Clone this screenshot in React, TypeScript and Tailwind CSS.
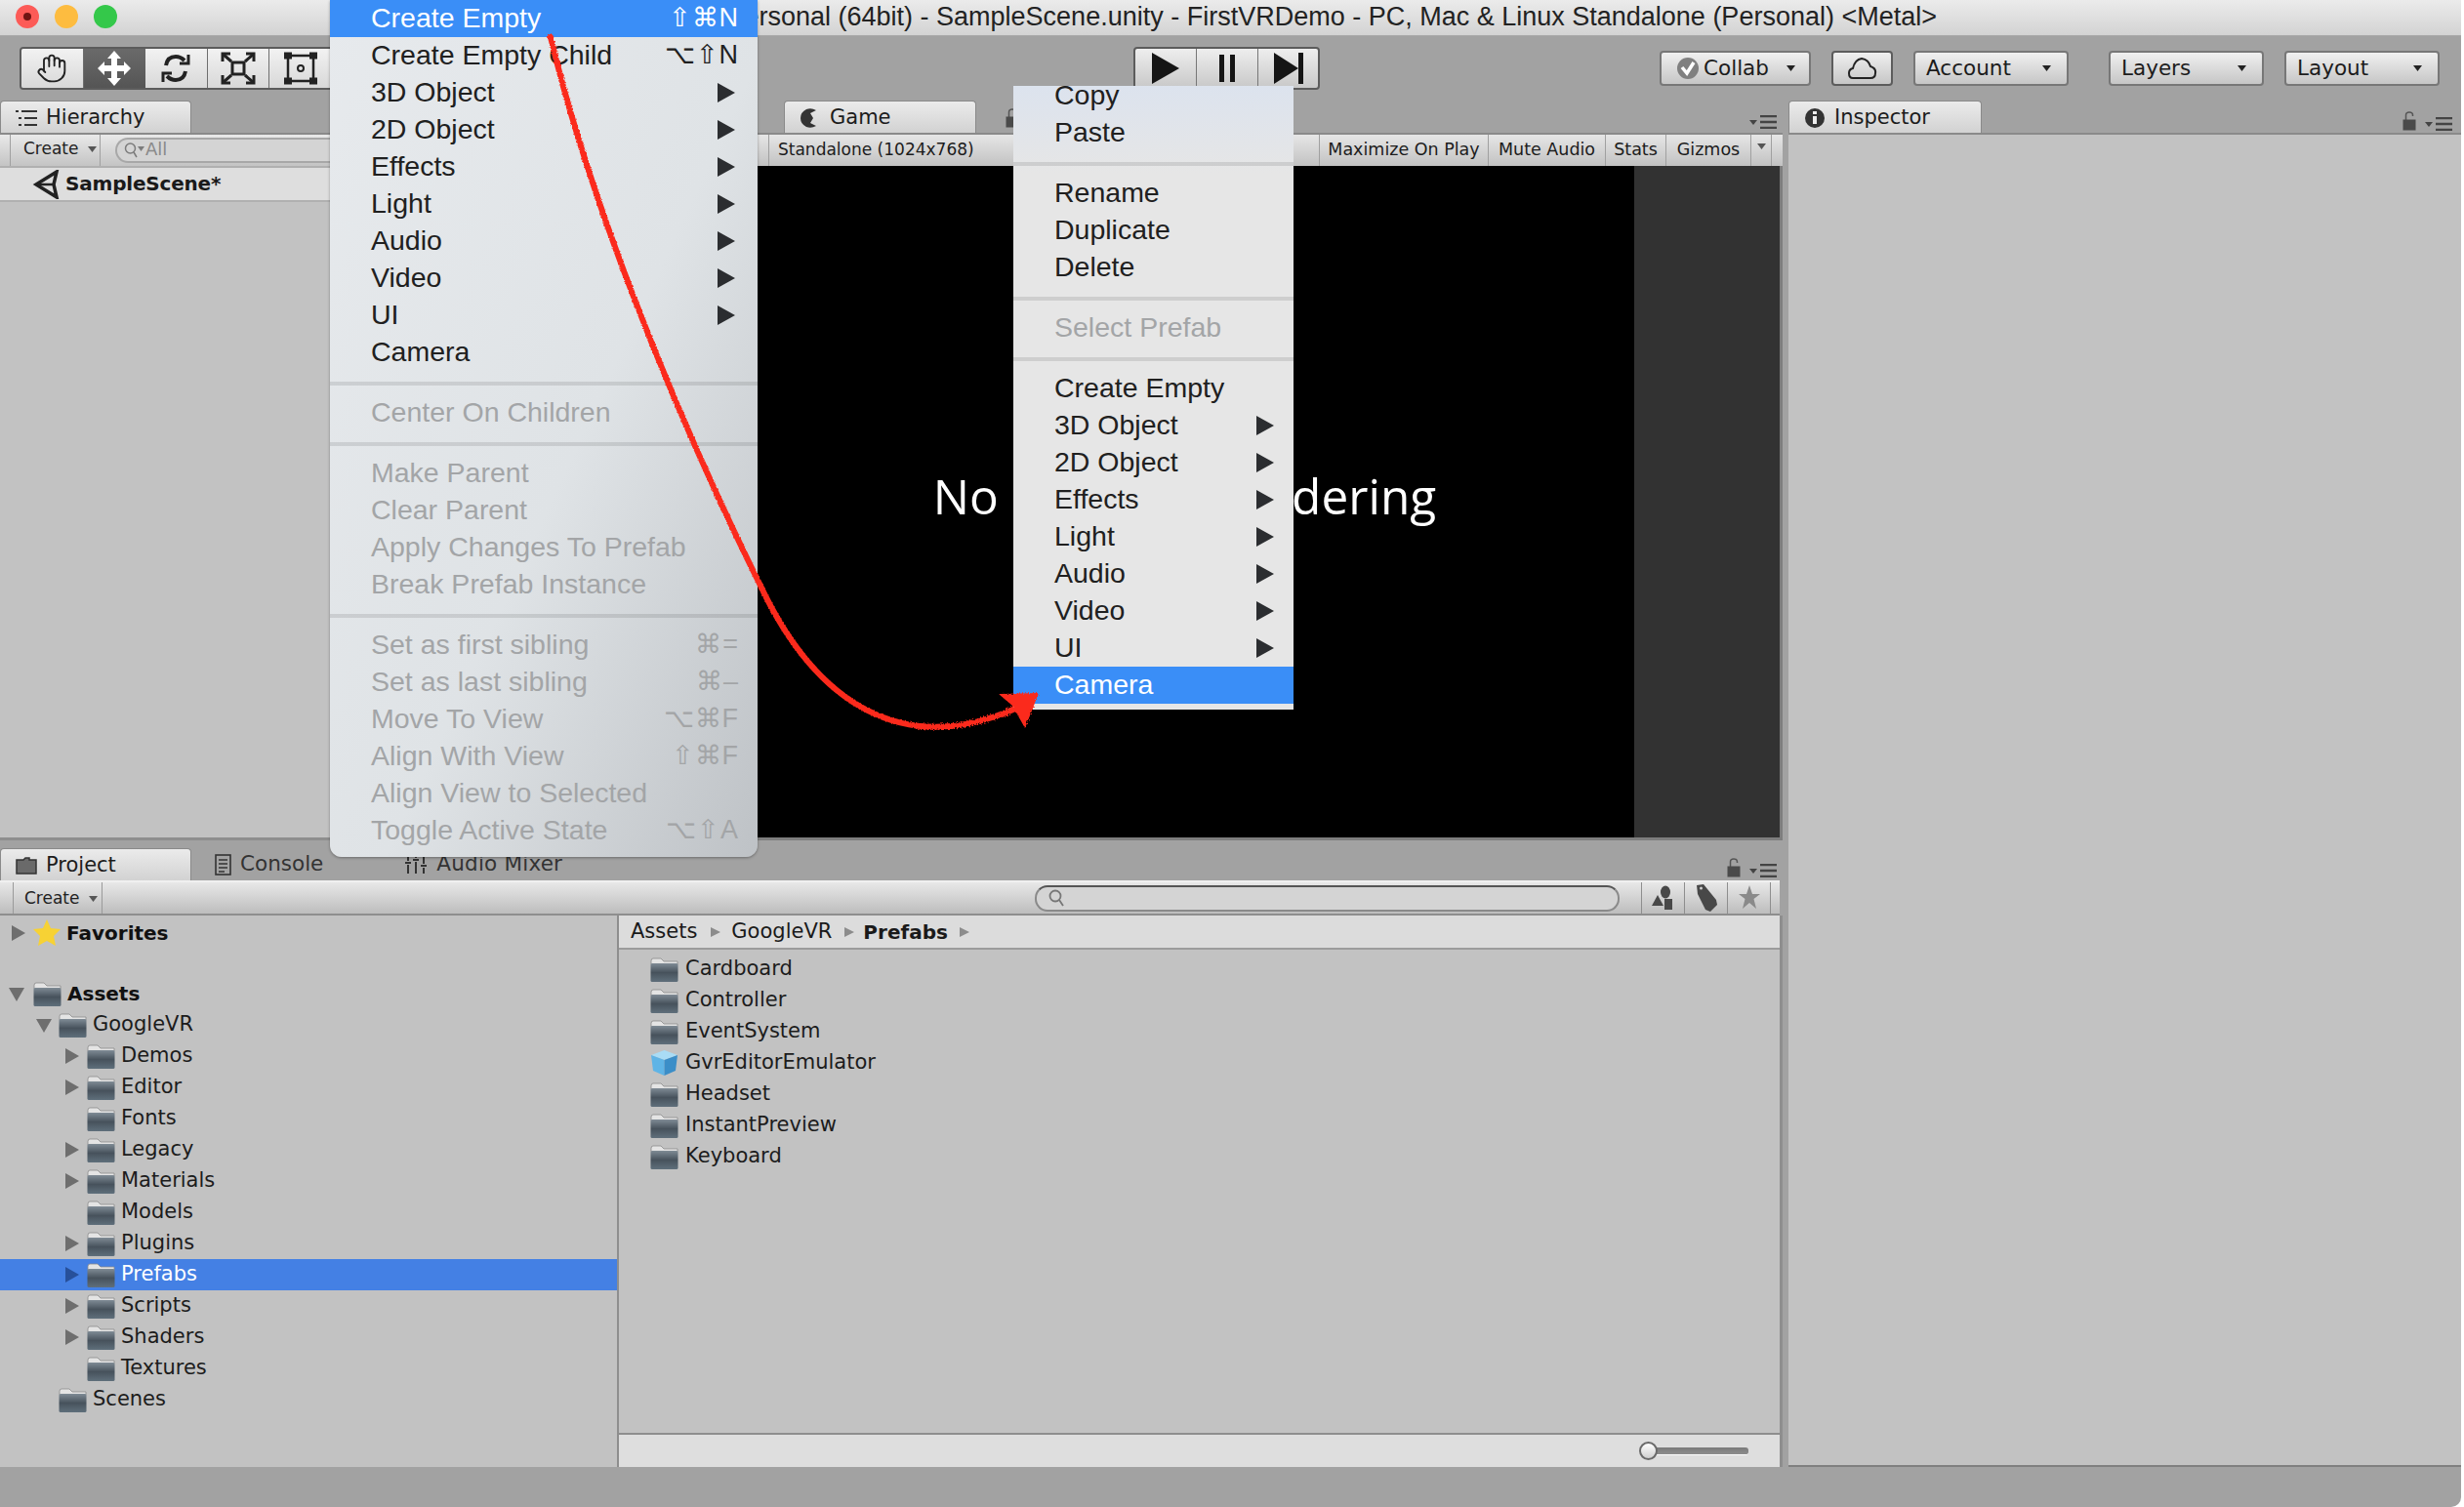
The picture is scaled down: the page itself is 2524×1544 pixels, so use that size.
import { Hand } from "lucide-react";

interface MenuRow {
  label?: string;
  shortcut?: string;
  arrow?: boolean;
  disabled?: boolean;
  active?: boolean;
  separator?: boolean;
}

const hierarchyMenu: MenuRow[] = [
  { label: "Create Empty", shortcut: "⇧⌘N", active: true },
  { label: "Create Empty Child", shortcut: "⌥⇧N" },
  { label: "3D Object", arrow: true },
  { label: "2D Object", arrow: true },
  { label: "Effects", arrow: true },
  { label: "Light", arrow: true },
  { label: "Audio", arrow: true },
  { label: "Video", arrow: true },
  { label: "UI", arrow: true },
  { label: "Camera" },
  { separator: true },
  { label: "Center On Children", disabled: true },
  { separator: true },
  { label: "Make Parent", disabled: true },
  { label: "Clear Parent", disabled: true },
  { label: "Apply Changes To Prefab", disabled: true },
  { label: "Break Prefab Instance", disabled: true },
  { separator: true },
  { label: "Set as first sibling", shortcut: "⌘=", disabled: true },
  { label: "Set as last sibling", shortcut: "⌘–", disabled: true },
  { label: "Move To View", shortcut: "⌥⌘F", disabled: true },
  { label: "Align With View", shortcut: "⇧⌘F", disabled: true },
  { label: "Align View to Selected", disabled: true },
  { label: "Toggle Active State", shortcut: "⌥⇧A", disabled: true },
];

const contextMenu: MenuRow[] = [
  { label: "Copy" },
  { label: "Paste" },
  { separator: true },
  { label: "Rename" },
  { label: "Duplicate" },
  { label: "Delete" },
  { separator: true },
  { label: "Select Prefab", disabled: true },
  { separator: true },
  { label: "Create Empty" },
  { label: "3D Object", arrow: true },
  { label: "2D Object", arrow: true },
  { label: "Effects", arrow: true },
  { label: "Light", arrow: true },
  { label: "Audio", arrow: true },
  { label: "Video", arrow: true },
  { label: "UI", arrow: true },
  { label: "Camera", active: true },
];

const tree = [
  { name: "GoogleVR", depth: 1, open: true },
  { name: "Demos", depth: 2, arrow: true },
  { name: "Editor", depth: 2, arrow: true },
  { name: "Fonts", depth: 2 },
  { name: "Legacy", depth: 2, arrow: true },
  { name: "Materials", depth: 2, arrow: true },
  { name: "Models", depth: 2 },
  { name: "Plugins", depth: 2, arrow: true },
  { name: "Prefabs", depth: 2, arrow: true, selected: true },
  { name: "Scripts", depth: 2, arrow: true },
  { name: "Shaders", depth: 2, arrow: true },
  { name: "Textures", depth: 2 },
  { name: "Scenes", depth: 1 },
];

const assets = ["Cardboard", "Controller", "EventSystem", "GvrEditorEmulator", "Headset", "InstantPreview", "Keyboard"];

function Folder() {
  return (
    <svg width="29" height="27" viewBox="0 0 29 27" className="shrink-0">
      <defs>
        <linearGradient id="folderBody" x1="0" y1="0" x2="0" y2="1">
          <stop offset="0" stopColor="#7f8b95" />
          <stop offset="0.5" stopColor="#47525c" />
          <stop offset="1" stopColor="#5f6f7b" />
        </linearGradient>
      </defs>
      <path d="M1 4.5Q1 2 3 2H11L14 5H28V8H1Z" fill="#e4e4e4" stroke="#8a8a8a" strokeWidth="0.8" />
      <rect x="0.5" y="7" width="28" height="19" rx="1.5" fill="url(#folderBody)" />
    </svg>
  );
}

function Cube() {
  return (
    <svg width="29" height="28" viewBox="0 0 29 28" className="shrink-0">
      <path d="M14.5 1L28 6L14.5 11L1 6Z" fill="#a9dcf5" />
      <path d="M1 6L14.5 11V27L3 22Z" fill="#5fb4e6" />
      <path d="M28 6L14.5 11V27L26 22Z" fill="#3b8ec8" />
    </svg>
  );
}

function Triangle({ open, color = "#6e6e6e" }: { open?: boolean; color?: string }) {
  return (
    <svg width="18" height="18" viewBox="0 0 18 18" className="shrink-0">
      <path d={open ? "M1 3H17L9 17Z" : "M2 1L16 9L2 17Z"} fill={color} />
    </svg>
  );
}

function ListMenuIcon() {
  return (
    <svg width="28" height="14" viewBox="0 0 28 14" className="shrink-0">
      <path d="M0 5H8L4 10Z" fill="#444" />
      <path d="M11 1H28M11 7H28M11 13H28" stroke="#444" strokeWidth="2.4" />
    </svg>
  );
}

function LockIcon() {
  return (
    <svg width="14" height="20" viewBox="0 0 14 20" className="shrink-0">
      <path d="M3.5 9V4Q3.5 1 7 1T10.5 4V5" fill="none" stroke="#555" strokeWidth="1.5" />
      <rect x="0.5" y="8.5" width="13" height="11" fill="#4a4a4a" />
    </svg>
  );
}

function SmallCaret({ color = "#222" }: { color?: string }) {
  return (
    <svg width="9" height="6" viewBox="0 0 9 6" className="shrink-0">
      <path d="M0 0H9L4.5 6Z" fill={color} />
    </svg>
  );
}

function Crumb({ className }: { className: string }) {
  return (
    <svg width="12" height="12" viewBox="0 0 12 12" className={className}>
      <path d="M1 1L11 6L1 11Z" fill="#8c8c8c" />
    </svg>
  );
}

function ToolButton({ children, active }: { children: React.ReactNode; active?: boolean }) {
  return (
    <div
      className={
        active
          ? "w-[64px] h-full flex items-center justify-center bg-[linear-gradient(#6a6a6a,#555555)]"
          : "w-[64px] h-full flex items-center justify-center border-r border-[#6e6e6e] bg-[linear-gradient(#f2f2f2,#d8d8d8)]"
      }
    >
      {children}
    </div>
  );
}

function ToolbarSelect({ label, width, gap }: { label: string; width: string; gap?: boolean }) {
  return (
    <div
      className={`${width} ${gap ? "ml-[41px]" : "ml-[21px]"} h-[36px] flex items-center justify-between pl-[11px] pr-[16px] rounded-[4px] border-2 border-[#777777] bg-[linear-gradient(#f0f0f0,#c6c6c6)] text-[21.5px] text-[#1c1c1c]`}
    >
      <span>{label}</span>
      <SmallCaret />
    </div>
  );
}

function PanelTab({ children, width }: { children: React.ReactNode; width: string }) {
  return (
    <div
      className={`${width} h-[33px] flex items-center gap-[9px] pl-[15px] pt-[1px] rounded-t-[4px] border-t border-x border-[#8a8a8a] bg-[linear-gradient(#ebebeb,#d2d2d2)] text-[21px] text-[#1c1c1c]`}
    >
      {children}
    </div>
  );
}

function MenuList({ rows, arrowGap }: { rows: MenuRow[]; arrowGap: string }) {
  return (
    <>
      {rows.map((row, index) =>
        row.separator ? (
          <div key={index} className="h-[24px] pt-[11px]">
            <div className="h-[4px] bg-black/10" />
          </div>
        ) : (
          <div
            key={index}
            className={`h-[38px] shrink-0 flex items-center justify-between pr-[19px] pl-[42px] ${
              row.active ? "bg-[#3a8ef7] text-white" : row.disabled ? "text-[#a3a5a7]" : "text-[#202020]"
            }`}
          >
            <span className="whitespace-nowrap pb-[2px]">{row.label}</span>
            {row.shortcut && <span className="text-[27px] font-['Liberation_Sans',sans-serif] whitespace-nowrap tracking-[1px] pb-[2px]">{row.shortcut}</span>}
            {row.arrow && (
              <svg width="18" height="20" viewBox="0 0 18 20" className={`shrink-0 ${arrowGap}`}>
                <path d="M0 0L18 10L0 20Z" fill="#2b2d30" />
              </svg>
            )}
          </div>
        ),
      )}
    </>
  );
}

export default function App() {
  return (
    <div className="relative w-[2524px] h-[1544px] overflow-hidden bg-white font-['DejaVu_Sans',sans-serif]">
      <div className="w-[2521px] h-full flex flex-col bg-[#a2a2a2] rounded-br-[10px]">
        {/* title bar */}
        <div className="h-[37px] shrink-0 relative flex items-center justify-end pr-[537px] pb-[2px] border-b border-[#a8a8a8] bg-[linear-gradient(#ebebeb,#d3d3d3)] text-[27px] text-[#222] font-['Liberation_Sans',sans-serif]">
          <div className="absolute left-[16px] top-[5px] flex gap-[16px]">
            <div className="w-[24px] h-[24px] rounded-full bg-[#fc5b57] flex items-center justify-center">
              <div className="w-[8px] h-[8px] rounded-full bg-[#6e1512]" />
            </div>
            <div className="w-[24px] h-[24px] rounded-full bg-[#fdbc40]" />
            <div className="w-[24px] h-[24px] rounded-full bg-[#34c84a]" />
          </div>
          <span className="whitespace-nowrap">Personal (64bit) - SampleScene.unity - FirstVRDemo - PC, Mac &amp; Linux Standalone (Personal) &lt;Metal&gt;</span>
        </div>

        {/* toolbar */}
        <div className="h-[66px] shrink-0 flex items-start pt-[11px]">
          <div className="ml-[20px] w-[322px] h-[44px] flex rounded-[4px] border-2 border-[#5c5c5c] overflow-hidden">
            <ToolButton>
              <Hand size={32} strokeWidth={1.4} color="#222" />
            </ToolButton>
            <ToolButton active>
              <svg width="36" height="38" viewBox="0 0 36 38">
                <path d="M18 1L25 9H21V16H28V12L35 19L28 26V22H21V29H25L18 37L11 29H15V22H8V26L1 19L8 12V16H15V9H11Z" fill="#fff" />
              </svg>
            </ToolButton>
            <ToolButton>
              <svg width="30" height="32" viewBox="0 0 30 32" fill="none" stroke="#222" strokeWidth="4">
                <path d="M5 13C6 7 10 4 15 4C19 4 22 6 24 8" />
                <path d="M25 19C24 25 20 28 15 28C11 28 8 26 6 24" />
                <path d="M28 2V11H19" strokeWidth="3" />
                <path d="M2 30V21H11" strokeWidth="3" />
              </svg>
            </ToolButton>
            <ToolButton>
              <svg width="36" height="34" viewBox="0 0 36 34" fill="none" stroke="#222" strokeWidth="3">
                <rect x="12" y="11" width="12" height="12" />
                <path d="M3 3L11 10M33 3L25 10M3 31L11 24M33 31L25 24" />
                <path d="M2 10V2H10M26 2H34V10M2 24V32H10M26 32H34V24" />
              </svg>
            </ToolButton>
            <ToolButton>
              <svg width="36" height="36" viewBox="0 0 36 36" fill="none" stroke="#222" strokeWidth="3">
                <path d="M5 5H31V31H5Z" strokeWidth="2.5" />
                <circle cx="18" cy="18" r="3" strokeWidth="2" />
                <path d="M1 5H9M27 5H35M1 31H9M27 31H35" strokeWidth="7" />
              </svg>
            </ToolButton>
          </div>

          <div className="ml-[819px] w-[191px] h-[44px] flex rounded-[4px] border-2 border-[#5c5c5c] overflow-hidden bg-[linear-gradient(#eeeeee,#c8c8c8)]">
            <div className="w-[63px] h-full flex items-center justify-center border-r border-[#777]">
              <svg width="32" height="32" viewBox="0 0 32 32">
                <path d="M2 0L30 16L2 32Z" fill="#151515" />
              </svg>
            </div>
            <div className="w-[63px] h-full flex items-center justify-center border-r border-[#777] gap-[6px]">
              <div className="w-[5px] h-[28px] bg-[#151515]" />
              <div className="w-[5px] h-[28px] bg-[#151515]" />
            </div>
            <div className="flex-1 h-full flex items-center justify-center">
              <svg width="32" height="32" viewBox="0 0 32 32">
                <path d="M1 0L26 16L1 32Z" fill="#151515" />
                <rect x="26" y="0" width="5" height="32" fill="#151515" />
              </svg>
            </div>
          </div>

          <div className="mt-[4px] ml-[348px] w-[155px] h-[36px] flex items-center pl-[15px] pr-[14px] rounded-[4px] border-2 border-[#777777] bg-[linear-gradient(#f0f0f0,#c6c6c6)] text-[21.5px] text-[#1c1c1c]">
            <svg width="24" height="24" viewBox="0 0 24 24" className="shrink-0">
              <circle cx="12" cy="12" r="11" fill="#808080" />
              <path d="M6 11L11 17L18 6" fill="none" stroke="#fff" strokeWidth="3.5" />
            </svg>
            <span className="ml-[4px] mr-auto">Collab</span>
            <SmallCaret />
          </div>
          <div className="mt-[4px] ml-[21px] w-[63px] h-[36px] flex items-center justify-center rounded-[4px] border-2 border-[#5c5c5c] bg-[linear-gradient(#f0f0f0,#c6c6c6)]">
            <svg width="30" height="24" viewBox="0 0 30 24" fill="none" stroke="#222" strokeWidth="2">
              <path d="M5 22Q1 22 1 17Q1 13 5 12Q7 3 14 2Q21 3 23 10Q29 12 28 17Q28 22 23 22Z" />
            </svg>
          </div>
          <div className="mt-[4px] flex">
            <ToolbarSelect label="Account" width="w-[159px]" />
            <ToolbarSelect label="Layers" width="w-[159px]" gap />
            <ToolbarSelect label="Layout" width="w-[159px]" />
          </div>
        </div>

        {/* panels */}
        <div className="flex-1 min-h-0 flex gap-[6px]">
          <div className="w-[1826px] flex flex-col">
            <div className="h-[758px] shrink-0 flex">
              {/* hierarchy */}
              <div className="w-[776px] flex flex-col">
                <PanelTab width="w-[196px]">
                  <svg width="22" height="18" viewBox="0 0 22 18" className="shrink-0">
                    <path d="M0 2H3M6 2H22M3 9H6M9 9H22M3 16H6M9 16H22" stroke="#333" strokeWidth="2.2" />
                  </svg>
                  <span>Hierarchy</span>
                </PanelTab>
                <div className="h-[34px] shrink-0 flex items-center border-t-2 border-[#8a8a8a] bg-[linear-gradient(#e9e9e9,#c4c4c4)] text-[17px] text-[#222]">
                  <div className="ml-[10px] w-[93px] h-full flex items-center gap-[9px] pl-[13px] pb-[2px] border-x border-[#a0a0a0]">
                    <span>Create</span>
                    <SmallCaret color="#555" />
                  </div>
                  <div className="ml-[15px] flex-1 h-[26px] flex items-center pl-[7px] rounded-l-[13px] border-2 border-r-0 border-[#a8a8a8] bg-[#d4d4d4] text-[18px] text-[#8a8a8a]">
                    <svg width="22" height="18" viewBox="0 0 22 18" fill="none" stroke="#7b7b7b" strokeWidth="1.5">
                      <circle cx="6.5" cy="7" r="5" />
                      <path d="M10 11L13 16" />
                      <path d="M14 5H21L17.5 10Z" fill="#7b7b7b" stroke="none" />
                    </svg>
                    <span className="pb-[3px]">All</span>
                  </div>
                </div>
                <div className="h-[37px] shrink-0 flex items-center gap-[6px] pl-[33px] border-y-2 border-[#b0b0b0] bg-[#dedede] text-[20px] font-bold text-[#1a1a1a]">
                  <svg width="28" height="30" viewBox="0 0 28 30" fill="none" stroke="#222" strokeWidth="3.5">
                    <path d="M25 2L4 15L25 28L22 15Z" />
                    <path d="M4 15H22" strokeWidth="2.5" />
                  </svg>
                  <span className="tracking-[-0.2px] pb-[2px]">SampleScene*</span>
                </div>
                <div className="flex-1 bg-[#c2c2c2] border-b-[3px] border-[#8e8e8e]" />
              </div>

              {/* game */}
              <div className="flex-1 flex flex-col min-w-0">
                <div className="h-[33px] shrink-0 flex items-start pl-[27px]">
                  <PanelTab width="w-[197px]">
                    <svg width="20" height="22" viewBox="0 0 20 22" className="shrink-0">
                      <path d="M17 3Q12 0 7 2Q1 5 1 11Q1 17 7 20Q12 22 17 19L11 16L14 11L11 6Z" fill="#333" />
                    </svg>
                    <span className="ml-[2px]">Game</span>
                  </PanelTab>
                  <div className="ml-[30px] mt-[8px]">
                    <LockIcon />
                  </div>
                  <div className="ml-auto mr-[6px] mt-[15px]">
                    <ListMenuIcon />
                  </div>
                </div>
                <div className="h-[34px] shrink-0 flex items-center border-t-2 border-[#8a8a8a] bg-[linear-gradient(#e6e6e6,#c2c2c2)] text-[17.5px] text-[#1c1c1c] whitespace-nowrap">
                  <div className="ml-[11px] pl-[9px] border-l border-[#a0a0a0] h-full flex items-center text-[17px] pb-[1px]">Standalone (1024x768)</div>
                  <div className="ml-auto w-[174px] h-full flex items-center justify-center pb-[1px] border-x border-[#a0a0a0]">Maximize On Play</div>
                  <div className="w-[120px] h-full flex items-center justify-center pb-[1px] border-r border-[#a0a0a0]">Mute Audio</div>
                  <div className="w-[62px] h-full flex items-center justify-center pb-[1px] border-r border-[#a0a0a0]">Stats</div>
                  <div className="w-[87px] h-full flex items-center justify-center pb-[1px] border-r border-[#a0a0a0]">Gizmos</div>
                  <div className="w-[21px] h-full flex items-start pt-[9px] justify-center border-r border-[#a0a0a0]">
                    <SmallCaret color="#555" />
                  </div>
                  <div className="w-[11px]" />
                </div>
                <div className="flex-1 flex border-r-[3px] border-b-[3px] border-[#7e7e7e]">
                  <div className="w-[898px] bg-black flex items-center justify-center pr-[23px] pb-[12px] text-[49.5px] text-white whitespace-nowrap font-['Open_Sans',sans-serif]">
                    No cameras rendering
                  </div>
                  <div className="flex-1 bg-[#323232]" />
                </div>
              </div>
            </div>

            {/* project */}
            <div className="flex-1 min-h-0 flex flex-col">
              <div className="h-[41px] shrink-0 flex items-end">
                <PanelTab width="w-[196px]">
                  <svg width="22" height="18" viewBox="0 0 22 18" className="shrink-0">
                    <path d="M1 17V3H8L10 1H14V3H21V17Z" fill="#6a6a6a" stroke="#333" strokeWidth="1.5" />
                  </svg>
                  <span>Project</span>
                </PanelTab>
                <div className="ml-[24px] h-[33px] flex items-center gap-[9px] text-[21.5px] text-[#333]">
                  <svg width="17" height="22" viewBox="0 0 17 22" fill="none" stroke="#333" strokeWidth="1.6">
                    <rect x="1" y="1" width="15" height="20" />
                    <path d="M4 6H13M4 10H13M4 14H13M4 18H10" />
                  </svg>
                  <span>Console</span>
                </div>
                <div className="ml-[84px] h-[33px] flex items-center gap-[10px] text-[21.5px] tracking-[0.2px] text-[#333]">
                  <svg width="22" height="22" viewBox="0 0 22 22" stroke="#333" strokeWidth="2">
                    <path d="M3 2V7M3 11V20M11 2V4M11 8V20M19 2V10M19 14V20M0 9H6M8 6H14M16 12H22" />
                  </svg>
                  <span>Audio Mixer</span>
                </div>
                <div className="ml-auto mb-[3px] flex items-end gap-[9px] pr-[6px]">
                  <LockIcon />
                  <ListMenuIcon />
                </div>
              </div>
              <div className="h-[36px] mr-[3px] shrink-0 flex items-center border-t-2 border-[#f0f0f0] border-b-2 border-b-[#8e8e8e] bg-[linear-gradient(#e8e8e8,#bdbdbd)] text-[17px] text-[#222]">
                <div className="ml-[13px] w-[92px] h-full flex items-center gap-[9px] pl-[11px] pt-[2px] border-x border-[#9a9a9a]">
                  <span>Create</span>
                  <SmallCaret color="#555" />
                </div>
                <div className="ml-[955px] w-[599px] h-[27px] flex items-center pl-[12px] rounded-[13px] border-2 border-[#8a8a8a] border-t-[#555] bg-[#d4d4d4]">
                  <svg width="18" height="20" viewBox="0 0 18 20" fill="none" stroke="#777" strokeWidth="1.8">
                    <circle cx="7" cy="8" r="5.5" />
                    <path d="M11 12L15 18" />
                  </svg>
                </div>
                <div className="ml-[22px] h-full flex border-l border-[#8e8e8e]">
                  <div className="w-[44px] flex items-center justify-center border-r border-[#8e8e8e]">
                    <svg width="24" height="26" viewBox="0 0 24 26" fill="#484848">
                      <ellipse cx="14" cy="7" rx="5" ry="6.5" />
                      <path d="M6 10L12 21H0Z" />
                      <rect x="13" y="14" width="8" height="11" />
                    </svg>
                  </div>
                  <div className="w-[44px] flex items-center justify-center border-r border-[#8e8e8e]">
                    <svg width="24" height="30" viewBox="0 0 24 30" fill="#484848">
                      <path d="M2 2L9 1L22 17L23 22L16 29L11 27L3 11Z" />
                      <circle cx="6.5" cy="5" r="1.5" fill="#cfcfcf" />
                    </svg>
                  </div>
                  <div className="w-[44px] flex items-center justify-center border-r border-[#8e8e8e]">
                    <svg width="22" height="26" viewBox="0 0 22 26" fill="#8a8a8a">
                      <path d="M11 0L14 9H22L15.5 14L18 24L11 18L4 24L6.5 14L0 9H8Z" />
                    </svg>
                  </div>
                </div>
              </div>
              <div className="flex-1 min-h-0 flex border-r-[3px] border-[#8e8e8e]">
                <div className="w-[632px] shrink-0 bg-[#c2c2c2] text-[21px] text-[#1c1c1c] pt-[2px]">
                  <div className="h-[32px] flex items-center pl-[10px]">
                    <Triangle />
                    <svg width="30" height="30" viewBox="0 0 30 30" className="ml-[5px] shrink-0">
                      <path d="M15 1L19 10L29 11L22 18L24 28L15 23L6 28L8 18L1 11L11 10Z" fill="#f7d234" />
                    </svg>
                    <span className="ml-[5px] text-[20px] font-bold text-[#111]">Favorites</span>
                  </div>
                  <div className="h-[30px]" />
                  <div className="h-[32px] flex items-center pl-[8px]">
                    <Triangle open />
                    <div className="ml-[8px]">
                      <Folder />
                    </div>
                    <span className="ml-[6px] text-[20px] font-bold text-[#111]">Assets</span>
                  </div>
                  {tree.map((node) => (
                    <div
                      key={node.name}
                      className={`h-[32px] flex items-center ${node.depth === 1 ? "pl-[36px]" : "pl-[65px]"} ${node.selected ? "bg-[#4480e4] text-white" : ""}`}
                    >
                      <div className="w-[18px] shrink-0">
                        {(node.arrow || node.open) && <Triangle open={node.open} color={node.selected ? "#27509a" : "#6e6e6e"} />}
                      </div>
                      <div className="ml-[6px]">
                        <Folder />
                      </div>
                      <span className="ml-[6px]">{node.name}</span>
                    </div>
                  ))}
                </div>
                <div className="flex-1 min-w-0 flex flex-col border-l-2 border-[#8e8e8e]">
                  <div className="h-[35px] shrink-0 flex items-center pl-[12px] pt-[1px] border-b-2 border-[#9c9c9c] bg-[#dcdcdc] text-[21px] text-[#1a1a1a]">
                    <span>Assets</span>
                    <Crumb className="ml-[13px] mr-[10px]" />
                    <span>GoogleVR</span>
                    <Crumb className="ml-[12px] mr-[8px]" />
                    <span className="text-[20px] font-bold">Prefabs</span>
                    <Crumb className="ml-[11px]" />
                  </div>
                  <div className="flex-1 bg-[#c2c2c2] pt-[4px] pl-[32px] text-[21px] text-[#1c1c1c]">
                    {assets.map((name) => (
                      <div key={name} className="h-[32px] flex items-center gap-[7px]">
                        {name === "GvrEditorEmulator" ? <Cube /> : <Folder />}
                        <span>{name}</span>
                      </div>
                    ))}
                  </div>
                  <div className="h-[35px] shrink-0 flex items-center justify-end pr-[32px] border-t-2 border-[#8e8e8e] bg-[#dedede]">
                    <div className="relative w-[102px] h-[8px] rounded-r-[3px] bg-[linear-gradient(#7a7a7a,#8e8e8e)] border-b border-white">
                      <div className="absolute -left-[10px] -top-[6px] w-[19px] h-[19px] rounded-full border-2 border-[#6a6a6a] bg-[linear-gradient(#ffffff,#cfcfcf)]" />
                    </div>
                  </div>
                </div>
              </div>
            </div>
          </div>

          {/* inspector */}
          <div className="flex-1 flex flex-col min-w-0">
            <div className="h-[33px] shrink-0 flex items-start">
              <PanelTab width="w-[198px]">
                <svg width="22" height="22" viewBox="0 0 22 22" className="shrink-0">
                  <circle cx="11" cy="11" r="10" fill="#333" />
                  <rect x="9" y="9" width="4" height="8" fill="#eee" />
                  <rect x="9" y="4" width="4" height="3" fill="#eee" />
                </svg>
                <span>Inspector</span>
              </PanelTab>
              <div className="ml-auto mr-[9px] mt-[11px] flex items-end gap-[9px]">
                <LockIcon />
                <ListMenuIcon />
              </div>
            </div>
            <div className="flex-1 border-t-2 border-[#8a8a8a] border-b-2 border-b-[#808080] bg-[#c2c2c2]" />
          </div>
        </div>

        {/* status bar */}
        <div className="h-[41px] shrink-0" />
      </div>

      {/* create menu from the hierarchy */}
      <div className="absolute left-[338px] top-0 w-[438px] h-[878px] rounded-b-[12px] overflow-hidden text-[28.5px] font-['Liberation_Sans',sans-serif] bg-[linear-gradient(115deg,#e7eaed_0%,#dfe3e6_55%,#bec2c6_100%)] shadow-[0_1px_3px_rgba(0,0,0,0.35)]">
        <MenuList rows={hierarchyMenu} arrowGap="mr-[4px]" />
      </div>

      {/* context menu over the game view */}
      <div className="absolute left-[1038px] top-[88px] w-[287px] h-[639px] overflow-hidden text-[28.5px] font-['Liberation_Sans',sans-serif] bg-[linear-gradient(#dce3ee,#e6e6e6_14%)]">
        <div className="-mt-[9px]">
          <MenuList rows={contextMenu} arrowGap="mr-[1px]" />
        </div>
      </div>

      {/* red hand drawn arrow */}
      <svg className="absolute left-0 top-0 pointer-events-none" width="2524" height="1544" viewBox="0 0 2524 1544">
        <defs>
          <filter id="rough" x="-5%" y="-5%" width="110%" height="110%">
            <feTurbulence type="fractalNoise" baseFrequency="0.7" numOctaves="2" seed="4" />
            <feDisplacementMap in="SourceGraphic" scale="4" />
          </filter>
        </defs>
        <g filter="url(#rough)" fill="#fb2a1c">
          <path
            d="M564 38C600 190 680 400 778 598C835 720 925 780 1047 723"
            fill="none"
            stroke="#fb2a1c"
            strokeWidth="6"
            strokeLinecap="round"
          />
          <path d="M1023 711L1064 710L1050 746L1037 723Z" />
        </g>
      </svg>
    </div>
  );
}
